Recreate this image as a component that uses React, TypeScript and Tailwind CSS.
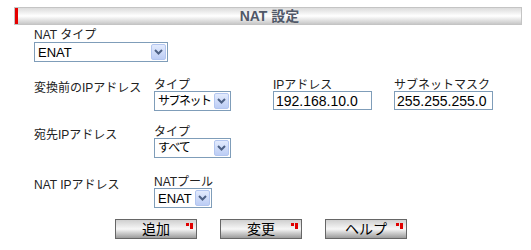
import React from "react";

const font = { fontFamily: '"Liberation Sans", "Noto Sans CJK JP", sans-serif' };

function Arrow() {
  return (
    <div className="ml-auto mr-px flex h-[16px] w-[15px] shrink-0 items-center justify-center rounded-[2px] border border-[#b3c6f0] bg-gradient-to-b from-[#e3ebfd] to-[#bccdf5]">
      <svg width="9" height="6" viewBox="0 0 9 6">
        <path d="M1 1 L4.5 4.5 L8 1" fill="none" stroke="#4d6185" strokeWidth="2" />
      </svg>
    </div>
  );
}

function Select({ value, className }: { value: string; className: string }) {
  return (
    <div className={"flex h-[20px] items-center overflow-hidden whitespace-nowrap border border-[#7f9db9] bg-white pl-[3px] leading-none text-black " + className}>
      <span className="min-w-0 overflow-hidden">{value}</span>
      <Arrow />
    </div>
  );
}

function Field({ value }: { value: string }) {
  return (
    <div className="flex h-[19px] w-[99px] items-center border border-[#7f9db9] bg-white pl-[2px] text-[14px] leading-none text-black">
      {value}
    </div>
  );
}

function Button({ label }: { label: string }) {
  return (
    <div className="relative flex h-[20px] w-[82px] items-center justify-center border border-[#666] bg-gradient-to-b from-[#cfcfcf] via-[#f7f7f7] to-[#9c9c9c] text-[14px] leading-none text-black">
      {label}
      <svg className="absolute right-[3px] top-[3px]" width="7" height="6" viewBox="0 0 7 6">
        <rect x="0" y="0" width="3" height="3" fill="#e00000" />
        <rect x="4" y="0" width="3" height="3" fill="#e00000" />
        <rect x="4" y="3" width="3" height="3" fill="#e00000" />
      </svg>
    </div>
  );
}

export default function App() {
  return (
    <div className="h-[250px] w-[531px] overflow-hidden bg-white pt-[7px] text-[12px] leading-[12px] text-[#222]" style={font}>
      {/* title */}
      <div className="ml-[14px] flex h-[18px] w-[508px] border border-[#c4c4c4] bg-gradient-to-b from-[#dcdcdc] via-[#ffffff] to-[#c8c8c8]">
        <div className="w-[3px] bg-[#e60000]" />
        <div className="flex flex-1 items-center justify-center text-[14px] font-bold text-[#505868]">NAT 設定</div>
      </div>

      <div className="pl-[34px]">
        <div className="mt-[4px]">NAT タイプ</div>
        <Select value="ENAT" className="mt-[1px] w-[134px] text-[13px]" />

        <div className="mt-[17px] grid grid-cols-[120px_119px_121px_auto]">
          <div className="pt-[3px]">変換前のIPアドレス</div>
          <div>
            <div>タイプ</div>
            <Select value="サブネット" className="w-[77px] text-[12px] tracking-[-1.5px]" />
          </div>
          <div>
            <div>IPアドレス</div>
            <Field value="192.168.10.0" />
          </div>
          <div>
            <div>サブネットマスク</div>
            <Field value="255.255.255.0" />
          </div>
        </div>

        <div className="mt-[15px] grid grid-cols-[120px_auto]">
          <div className="pt-[3px]">宛先IPアドレス</div>
          <div>
            <div>タイプ</div>
            <Select value="すべて" className="w-[77px] text-[12px] tracking-[-1px]" />
          </div>
        </div>

        <div className="mt-[18px] grid grid-cols-[120px_auto]">
          <div className="pt-[3px]">NAT IPアドレス</div>
          <div>
            <div>NATプール</div>
            <Select value="ENAT" className="w-[58px] text-[13px]" />
          </div>
        </div>
      </div>

      <div className="mt-[11px] flex gap-[23px] pl-[115px]">
        <Button label="追加" />
        <Button label="変更" />
        <Button label="ヘルプ" />
      </div>
    </div>
  );
}
